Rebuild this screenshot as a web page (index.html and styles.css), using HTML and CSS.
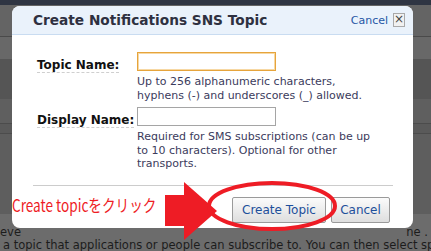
FILE: index.html
```html
<!DOCTYPE html>
<html lang="en">
<head>
    <meta charset="UTF-8">
    <title>Create Notifications SNS Topic</title>
    <link rel="stylesheet" href="styles.css">
</head>
<body>
    <div class="backdrop">
        <div class="band top"></div>
        <div class="band b1"></div>
        <div class="band b2"></div>
        <div class="band b3"></div>
        <div class="band b4"></div>
        <div class="band b5"></div>
        <div class="band b6"></div>
        <div class="page-text">
            <p class="cut"><span>eve</span><span>ne .</span></p>
            <p>a topic that applications or people can subscribe to. You can then select spe</p>
        </div>
    </div>

    <div class="dialog">
        <div class="dialog-header">
            <h2>Create Notifications SNS Topic</h2>
            <a class="header-cancel" href="#">Cancel</a>
            <span class="close-box">&#215;</span>
        </div>
        <div class="dialog-body">
            <div class="field">
                <div class="field-label"><label for="topic-name">Topic Name:</label></div>
                <div class="field-main">
                    <input type="text" id="topic-name" class="text-input focused">
                    <p class="hint">Up to 256 alphanumeric characters,<br>hyphens (-) and underscores (_) allowed.</p>
                </div>
            </div>
            <div class="field">
                <div class="field-label"><label for="display-name">Display Name:</label></div>
                <div class="field-main">
                    <input type="text" id="display-name" class="text-input">
                    <p class="hint">Required for SMS subscriptions (can be up<br>to 10 characters). Optional for other<br>transports.</p>
                </div>
            </div>
        </div>
        <div class="dialog-footer">
            <button class="btn btn-create">Create Topic</button>
            <button class="btn btn-cancel">Cancel</button>
        </div>
    </div>

    <!-- annotation drawn on top of the screenshot -->
    <div class="note">Create topicをクリック</div>
    <svg class="marks" width="431" height="251" viewBox="0 0 431 251">
        <polygon points="165,195 184,195 184,182 217,211 184,240 184,226 165,226" fill="#ee1c25"/>
        <ellipse cx="272" cy="206" rx="63" ry="23" fill="none" stroke="#ee1c25" stroke-width="4"/>
    </svg>
</body>
</html>
```

FILE: styles.css
```css
body {
    margin: 0;
    width: 431px;
    height: 251px;
    overflow: hidden;
    position: relative;
    background: #5e5e5e;
    font-family: "DejaVu Sans", Verdana, sans-serif;
}
.backdrop {
    display: flex;
    flex-direction: column;
    height: 251px;
}
.band {
    flex: none;
}
.band.top {
    height: 5px;
    background: #2f3543;
}
.band.b1 {
    height: 31px;
    background: #646464;
    border-bottom: 1px solid #4a4a4a;
}
.band.b2 {
    height: 22px;
    background: #686868;
}
.band.b3 {
    height: 40px;
    background: #555555;
}
.band.b4 {
    height: 24px;
    background: #5f5f5f;
    border-bottom: 1px solid #4c4c4c;
}
.band.b5 {
    height: 9px;
    background: #5a5a5a;
    border-bottom: 1px solid #4c4c4c;
}
.band.b6 {
    height: 80px;
    background: #5e5e5e;
}
.page-text {
    flex: 1;
    background: #6c6c6c;
    color: #1c1c1c;
    font-size: 11.5px;
    line-height: 13px;
    padding: 12px 0 0 3px;
}
.page-text p {
    margin: 0;
    white-space: nowrap;
}
.page-text .cut {
    display: flex;
    justify-content: space-between;
    margin-left: -3px;
    padding-right: 3px;
}

.dialog {
    position: absolute;
    left: 12px;
    top: 6px;
    width: 401px;
    height: 222px;
    background: #ffffff;
    border-radius: 8px;
    overflow: hidden;
}
.dialog-header {
    display: flex;
    align-items: center;
    height: 28px;
    padding: 0 8px 0 21px;
    background: #eaf2fb;
    border-bottom: 1px solid #c9dcf1;
}
.dialog-header h2 {
    flex: 1;
    margin: 0;
    font-size: 13.7px;
    color: #2e3040;
}
.header-cancel {
    color: #1f56a5;
    font-size: 11px;
    text-decoration: none;
    margin-right: 5px;
}
.close-box {
    box-sizing: border-box;
    width: 12px;
    height: 14px;
    border: 1px solid #a9a9a9;
    background: #f1f1f1;
    color: #444;
    font-size: 12px;
    line-height: 11px;
    text-align: center;
}
.dialog-body {
    padding: 17px 0 0 25px;
}
.field {
    display: flex;
}
.field + .field {
    margin-top: 5px;
}
.field-label {
    width: 100px;
    flex: none;
    padding-top: 2px;
}
.field-label label {
    display: inline-block;
    font-size: 12px;
    line-height: 14px;
    font-weight: bold;
    color: #111;
    white-space: nowrap;
    border-bottom: 1px dashed #cfcfcf;
}
.text-input {
    display: block;
    box-sizing: border-box;
    width: 139px;
    height: 19px;
    margin: 0;
    border: 1px solid #a5a5a5;
    padding: 0 2px;
    outline: none;
}
.text-input.focused {
    border-color: #e6a43c;
    box-shadow: inset 0 0 0 1px #f7d8a3;
}
.hint {
    margin: 4px 0 0;
    font-size: 11px;
    line-height: 13.5px;
    color: #3b3b5c;
    white-space: nowrap;
}
.dialog-footer {
    display: flex;
    justify-content: flex-end;
    gap: 5px;
    margin: 14px 20px 0 21px;
    padding: 11px 3px 0 0;
    border-top: 1px solid #cccccc;
}
.btn {
    height: 26px;
    padding: 0;
    border: 1px solid #9a9a9a;
    border-radius: 2px;
    background: linear-gradient(#fbfbfb, #dedede);
    color: #1d4f9b;
    font-family: "DejaVu Sans", Verdana, sans-serif;
    font-size: 12px;
}
.btn-create {
    width: 94px;
}
.btn-cancel {
    width: 59px;
}
.note {
    position: absolute;
    left: 12px;
    top: 195px;
    color: #ee1c25;
    font-family: "Noto Sans CJK JP", sans-serif;
    font-size: 17px;
    line-height: 20px;
    transform: scaleX(0.8);
    transform-origin: left center;
    white-space: nowrap;
}
.marks {
    position: absolute;
    left: 0;
    top: 0;
}
```
